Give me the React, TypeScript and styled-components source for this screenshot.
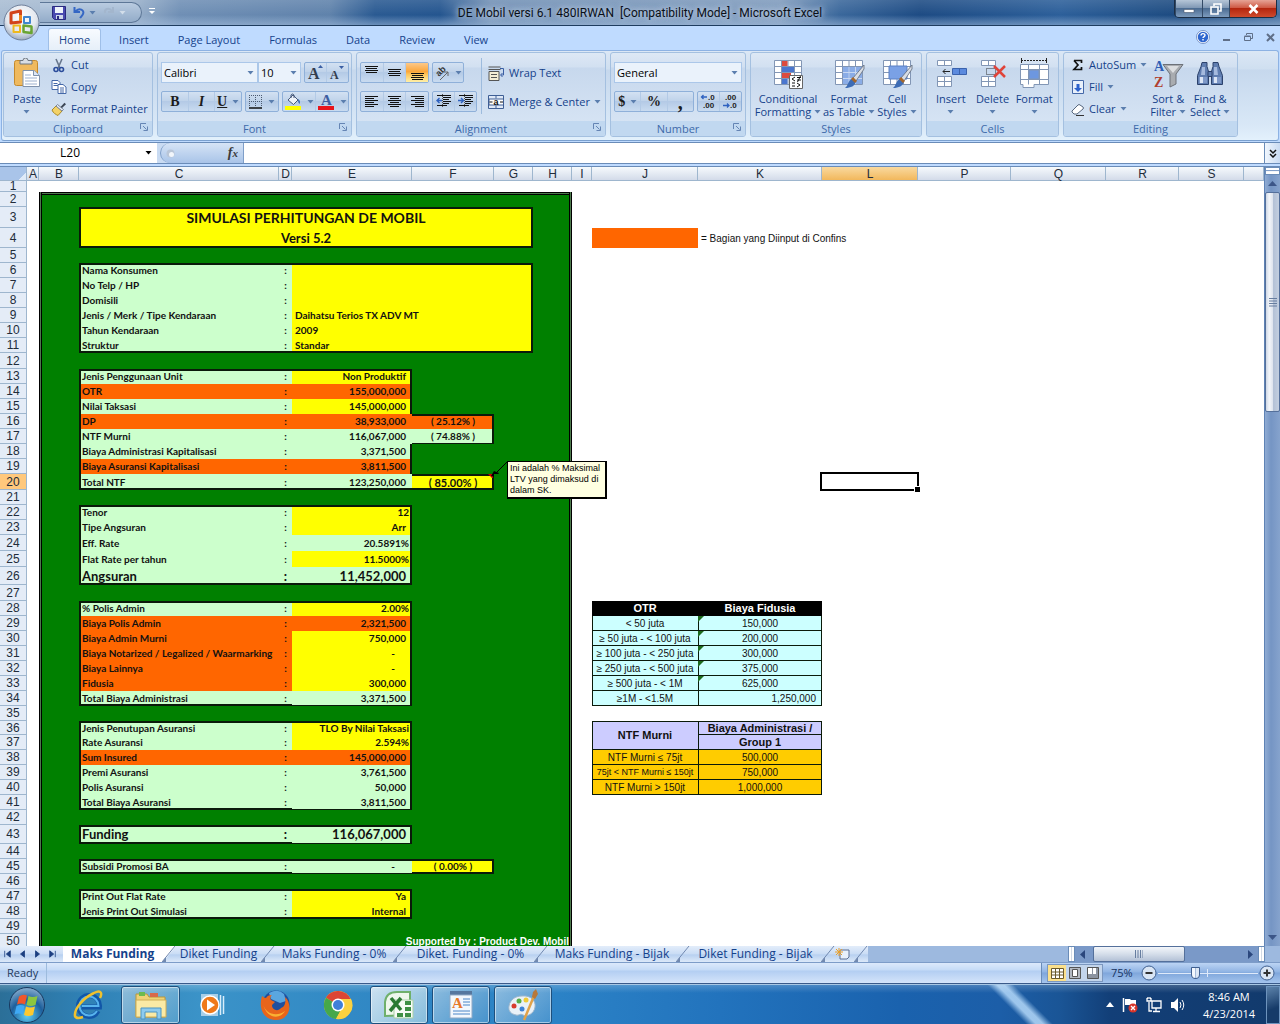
import React from 'react';
import styled, { createGlobalStyle, css } from 'styled-components';

const UI = `"Open Sans", "Noto Sans", sans-serif`;
const BODY = `Lato, "Open Sans", sans-serif`;
const GRID = `"Liberation Sans", Arial, sans-serif`;

const Global = createGlobalStyle`
  * { box-sizing: border-box; }
  body { margin: 0; font: 11px/14px ${UI}; color: #15428b; overflow: hidden; }
  button, input, select { font: inherit; color: inherit; margin: 0; padding: 0; border: 0; background: none; border-radius: 0; }
  svg { display: block; flex: none; }
`;

/* ---------- window frame ---------- */

const Window = styled.main`
  position: relative;
  display: flex;
  flex-direction: column;
  height: 100vh;
  background: #bfdbff;
`;

const TitleBar = styled.header`
  display: grid;
  grid-template-columns: 1fr auto 1fr;
  align-items: start;
  height: 26px;
  border-bottom: 1px solid #1e3c5f;
  background:
    linear-gradient(180deg, rgba(255,255,255,0.12), rgba(255,255,255,0) 60%, rgba(170,195,225,0.5)),
    linear-gradient(90deg, #a9bdd3 0, #9db3cc 130px, #6f8fb5 180px, #5f82ab 330px, #2a5a92 375px, #24558f 440px, #7190b5 490px, #7f9bbd 780px, #3a679b 840px, #1d4b84 920px, #2c5f9a 1060px, #1c4a80 1180px, #46709f 100%);
`;

const QuickBar = styled.div`
  display: flex;
  align-items: center;
  gap: 7px;
  width: 102px;
  height: 21px;
  margin: 2px 0 0 40px;
  padding-left: 12px;
  border: 1px solid #5d7797;
  border-left: 0;
  border-radius: 0 11px 11px 0;
  background: linear-gradient(180deg, #b9cbe0, #93acc9);
`;

const QuickArea = styled.div`
  display: flex;
  align-items: center;
  gap: 7px;
`;

const PlainButton = styled.button`
  display: flex;
  align-items: center;
  gap: 4px;
`;

const Title = styled.h1`
  margin: 4px 0 0;
  font: 12px/19px Roboto, ${UI};
  color: #0a0f18;
  text-shadow: 0 0 6px #c5d5e8, 0 0 6px #c5d5e8;
  white-space: pre;
`;

const Caption = styled.div`
  display: flex;
  justify-self: end;
  margin-right: 3px;
  height: 18px;
  border: 1px solid #1c2e45;
  border-top: 0;
  border-radius: 0 0 5px 5px;
  overflow: hidden;
`;

const CaptionButton = styled.button<{ $close?: boolean }>`
  display: grid;
  place-items: center;
  width: ${p => (p.$close ? 47 : 27)}px;
  border-left: 1px solid #334a66;
  background: ${p => (p.$close
    ? 'linear-gradient(180deg, #e6a396, #cf5a45 45%, #b4260f 50%, #cf4a2c)'
    : 'linear-gradient(180deg, #b6c6d8, #8199b5 45%, #4c6c92 50%, #7d9bbd)')};
`;

const OfficeButton = styled.button`
  position: absolute;
  left: 3px;
  top: 4px;
  z-index: 2;
`;

const TabRow = styled.nav`
  display: flex;
  align-items: flex-end;
  gap: 7px;
  height: 24px;
  padding-left: 48px;
  background: #bfdbff;
`;

const RibbonTab = styled.button<{ $active?: boolean }>`
  height: 22px;
  padding: 0 10px;
  border: 1px solid transparent;
  border-bottom: 0;
  border-radius: 3px 3px 0 0;
  ${p => p.$active && css`
    border-color: #9fbfe8;
    background: linear-gradient(180deg, #f8fbff, #e6eff9);
  `}
`;

const DocControls = styled.div`
  display: flex;
  align-items: center;
  gap: 13px;
  height: 24px;
  margin-left: auto;
  padding: 0 5px 2px 0;
`;

/* ---------- ribbon ---------- */

const Ribbon = styled.section`
  display: flex;
  gap: 4px;
  height: 91px;
  margin: 0 1px;
  padding: 1px 1px 3px;
  border: 1px solid #8db2e3;
  border-bottom-color: #7aa0cf;
  border-radius: 3px;
  background: linear-gradient(180deg, #dbe7f5 0, #cfdff0 18px, #c6d8ed 19px, #d9e8f7 75px, #e3f1fc);
`;

const Group = styled.div<{ $w: number }>`
  display: flex;
  flex-direction: column;
  width: ${p => p.$w}px;
  flex: none;
  border: 1px solid #a4c0e0;
  border-radius: 3px;
  overflow: hidden;
  background: linear-gradient(180deg, #dde8f5 0, #d2e0f1 14px, #c7d8ed 15px, #d9e6f5 100%);
`;

const GroupBody = styled.div`
  flex: 1;
  display: flex;
  padding: 0 3px;
`;

const GroupName = styled.div`
  display: flex;
  justify-content: center;
  align-items: center;
  position: relative;
  height: 15px;
  flex: none;
  color: #3e6aaa;
  background: #c1d8f0;
`;

const Launcher = styled.button`
  position: absolute;
  right: 4px;
  top: 2px;
`;

const Stack = styled.div<{ $gap?: number; $top?: number; $left?: number }>`
  display: flex;
  flex-direction: column;
  gap: ${p => p.$gap ?? 8}px;
  padding-top: ${p => p.$top ?? 9}px;
  padding-left: ${p => p.$left ?? 0}px;
`;

const Line = styled.div<{ $tight?: boolean }>`
  display: flex;
  gap: ${p => (p.$tight ? 0 : 3)}px;
  height: 21px;
`;

const Cluster = styled.div<{ $w: number }>`
  display: flex;
  width: ${p => p.$w}px;
  border: 1px solid #8fb0d9;
  border-radius: 2px;
  background: linear-gradient(180deg, #d3e1f2, #c0d3ea 45%, #b4cae6 50%, #c9dbf0);
`;

const Tool = styled.button<{ $on?: boolean }>`
  flex: 1;
  display: flex;
  align-items: center;
  justify-content: center;
  gap: 5px;
  & + & { border-left: 1px solid #b3cae6; }
  ${p => p.$on && css`background: linear-gradient(180deg, #fbc889, #fba63a 45%, #fdc65c 60%, #fff0a8);`}
`;

const Glyph = styled.span<{ $italic?: boolean; $underline?: boolean; $size?: number }>`
  font: bold ${p => p.$size ?? 14}px/16px "Liberation Serif", serif;
  color: #1b1b1b;
  ${p => p.$italic && css`font-style: italic;`}
  ${p => p.$underline && css`text-decoration: underline;`}
`;

const SelectBox = styled.span<{ $w: number }>`
  position: relative;
  display: block;
  width: ${p => p.$w}px;
  height: 21px;
  border: 1px solid #abc7e9;
  background: #eaf2fb;
  select { width: 100%; height: 100%; padding-left: 2px; appearance: none; color: #000; }
  svg { position: absolute; right: 3px; top: 8px; pointer-events: none; }
`;

const SmallCommand = styled.button`
  display: flex;
  align-items: center;
  gap: 4px;
  height: 22px;
  white-space: nowrap;
`;

const BigCommand = styled.button<{ $w: number }>`
  display: flex;
  flex-direction: column;
  align-items: center;
  width: ${p => p.$w}px;
  padding-top: 5px;
  line-height: 13px;
  white-space: nowrap;
`;

const BigText = styled.span`
  display: flex;
  flex-direction: column;
  align-items: center;
  padding-top: 2px;
`;

const WithArrow = styled.span`
  display: flex;
  align-items: center;
  gap: 3px;
  min-height: 13px;
`;

const Divider = styled.span`
  width: 1px;
  height: 56px;
  margin: 5px 6px 0 4px;
  background: #9dbbdd;
`;

/* ---------- formula bar ---------- */

const FormulaBar = styled.div`
  display: flex;
  height: 22px;
  margin-top: 1px;
  border: 1px solid #6a8cb8;
  border-width: 1px 0;
  background: #c9dbf2;
`;

const NameBox = styled.div`
  display: flex;
  align-items: center;
  width: 157px;
  background: #fff;
  color: #000;
  font-size: 12px;
  input { width: 140px; text-align: center; }
  button { display: grid; place-items: center; width: 17px; }
`;

const FxArea = styled.div`
  display: flex;
  align-items: center;
  justify-content: space-between;
  width: 84px;
  margin-left: 3px;
  padding: 0 5px;
  border: 1px solid #7f9fc9;
  border-width: 0 1px 0 1px;
  border-radius: 10px 0 0 10px;
  background: linear-gradient(180deg, #d6e4f6, #a9c4e8);
`;

const FxButton = styled.button`
  font: italic bold 14px/18px "Liberation Serif", serif;
  color: #3b3b3b;
  small { font-size: 11px; }
`;

const FormulaInput = styled.input`
  flex: 1;
  background: #fff;
`;

const ExpandButton = styled.button`
  display: grid;
  place-items: center;
  width: 16px;
  border-left: 1px solid #6a8cb8;
  background: linear-gradient(90deg, #f0f6fd, #c9dbf2);
`;

/* ---------- sheet ---------- */

const SheetArea = styled.section`
  flex: 1;
  min-height: 0;
  display: flex;
  margin-top: 2px;
  border-top: 1px solid #6a8cb8;
  background: #fff;
`;

const SheetView = styled.div`
  flex: 1;
  overflow: hidden;
`;

const Sheet = styled.table`
  width: 100%;
  table-layout: fixed;
  border-spacing: 0;
  font: bold 10px/11px ${BODY};
  color: #111;
`;

const ColHead = styled.th<{ $on?: boolean }>`
  height: 14px;
  padding: 1px 0 0 1px;
  font: 12px/12px ${GRID};
  color: #222c3a;
  border: 1px solid #9eb6ce;
  border-width: 0 1px 1px 0;
  background: ${p => (p.$on ? 'linear-gradient(180deg, #f9d99f, #f2b85c)' : 'linear-gradient(180deg, #f6fafd, #d3dbe9)')};
`;

const Corner = styled.th`
  padding: 0;
  border: 1px solid #9eb6ce;
  border-width: 0 1px 1px 0;
  background: linear-gradient(135deg, #a9c4e9 80%, #dfeaf8 81%);
`;

const RowHead = styled.th<{ $on?: boolean }>`
  padding: 0;
  font: 12px/10px ${GRID};
  color: #222c3a;
  border: 1px solid #9eb6ce;
  border-width: 0 1px 1px 0;
  background: ${p => (p.$on ? '#ffc87c' : '#e4ecf7')};
`;

type Edges = { l?: number; t?: number; r?: number; b?: number; double?: string };

const shadows = (e: Edges = {}) => {
  const out: string[] = [];
  if (e.l) out.push(`inset ${e.l}px 0 #0a1a0a`);
  if (e.r) out.push(`inset -${e.r}px 0 #0a1a0a`);
  if (e.t) out.push(`inset 0 ${e.t}px #0a1a0a`);
  if (e.b) out.push(`inset 0 -${e.b}px #0a1a0a`);
  for (const s of e.double ?? '') {
    const dir = { l: [1, 0], r: [-1, 0], t: [0, 1] }[s] as number[];
    [['#000', 1], ['#4d7a4d', 2], ['#000', 3]].forEach(([c, n]) =>
      out.push(`inset ${dir[0] * (n as number)}px ${dir[1] * (n as number)}px ${c}`));
  }
  return out.length ? out.join(', ') : 'none';
};

type CellStyle = {
  $bg?: string; $edges?: Edges; $align?: string; $pad?: number; $size?: number; $plain?: boolean; $grid?: boolean; $color?: string;
};

const Cell = styled.td<CellStyle>`
  position: relative;
  padding: 0 ${p => p.$pad ?? 3}px 0 ${p => Math.min(3, p.$pad ?? 3)}px;
  white-space: nowrap;
  background: ${p => p.$bg ?? 'transparent'};
  box-shadow: ${p => shadows(p.$edges)};
  text-align: ${p => p.$align ?? 'left'};
  ${p => p.$grid && css`font-family: ${GRID};`}
  ${p => p.$plain && css`font-weight: normal;`}
  ${p => p.$size && css`font-size: ${p.$size}px;`}
  ${p => p.$color && css`color: ${p.$color};`}
`;

const ErrorMark = styled.i`
  position: absolute;
  left: 0;
  top: 0;
  border: 3px solid transparent;
  border-color: #1d6b1d transparent transparent #1d6b1d;
`;

const Selection = styled.div`
  position: absolute;
  inset: -2px -1px -1px -2px;
  border: 2px solid #000;
  &::after {
    content: '';
    position: absolute;
    right: -3px;
    bottom: -3px;
    width: 5px;
    height: 5px;
    border: 1px solid #fff;
    border-width: 1px 0 0 1px;
    background: #000;
  }
`;

const Note = styled.div`
  position: absolute;
  left: 95px;
  top: -13px;
  z-index: 1;
  width: 100px;
  height: 38px;
  padding: 1px 2px;
  border: 1px solid #000;
  border-width: 1px 2px 2px 1px;
  background: #ffffe1;
  font: 9px/11px ${GRID};
  text-align: left;
  color: #000;
`;

const NoteArrow = styled.svg`
  position: absolute;
  right: -14px;
  top: -13px;
`;

const VScroll = styled.div`
  display: flex;
  flex-direction: column;
  width: 16px;
  border-left: 1px solid #5f83b5;
  background: linear-gradient(90deg, #8fabd3, #7595c4 40%, #86a3cd);
`;

const SplitHandle = styled.div`
  height: 8px;
  border: 1px solid #6a8cb8;
  background: linear-gradient(180deg, #fff 40%, #7d9bc6 41%, #fff 60%);
`;

const ScrollArrow = styled.button<{ $end?: boolean; $vertical?: boolean }>`
  display: grid;
  place-items: center;
  width: 15px;
  height: 17px;
  ${p => p.$end && (p.$vertical ? css`margin-top: auto;` : css`margin-left: auto;`)}
`;

const VThumb = styled.div`
  display: grid;
  place-items: center;
  height: 220px;
  border: 1px solid #54709b;
  border-radius: 2px;
  background: linear-gradient(90deg, #cfd8e6, #f3f6fa 25%, #dfe5ee 50%, #b3c1d6 55%, #c3cfe0);
`;

/* ---------- sheet tabs and status bar ---------- */

const TabBar = styled.div`
  display: flex;
  height: 17px;
  border-bottom: 1px solid #7d9cc8;
  background: #9db9df;
`;

const SheetTabs = styled.div`
  display: flex;
  background: linear-gradient(180deg, #e3edfa, #c9dcf5 50%, #b7d0f0 55%, #dce9f9);
`;

const NavButtons = styled.div`
  display: flex;
  width: 63px;
  button { display: grid; place-items: center; width: 15px; }
`;

const SheetTab = styled.button<{ $w: number; $active?: boolean }>`
  width: ${p => p.$w}px;
  font: 12px/16px ${UI};
  white-space: nowrap;
  ${p => p.$active && css`font-weight: bold; background: #fff;`}
`;

const HScroll = styled.div`
  display: flex;
  align-items: stretch;
  width: 212px;
  margin-left: auto;
  background: #7a99c8;
`;

const HSplit = styled.div`
  width: 7px;
  border: 1px solid #6a8cb8;
  background: linear-gradient(90deg, #fff 35%, #54709b 36%, #fff 55%);
`;

const ScrollCorner = styled.div`
  width: 15px;
  background: #9db9df;
`;

const HThumb = styled.div`
  display: grid;
  place-items: center;
  width: 92px;
  margin-left: 3px;
  border: 1px solid #54709b;
  border-radius: 2px;
  background: linear-gradient(180deg, #f3f6fa, #d5deea 50%, #b3c1d6);
`;

const StatusBar = styled.footer`
  display: flex;
  align-items: center;
  height: 21px;
  background: linear-gradient(180deg, #dce9fb, #c5dbf7 35%, #b3cef2 40%, #d4e4fa);
  border-bottom: 1px solid #3a5a8a;
`;

const Ready = styled.div`
  width: 47px;
  padding-left: 7px;
  border-right: 1px solid #9dbbdd;
  line-height: 20px;
  color: #1e395b;
`;

const ZoomArea = styled.div`
  display: flex;
  align-items: center;
  gap: 8px;
  width: 239px;
  height: 20px;
  margin-left: auto;
  padding-left: 5px;
  border-left: 1px solid #6a8cb8;
  background: linear-gradient(180deg, #bcd4f4, #8fb3e3 45%, #7fa6db 50%, #a5c5ee);
  color: #15325f;
`;

const Views = styled.div`
  display: flex;
  border: 1px solid #7b97bf;
  background: #c3d5ec;
  button { display: grid; place-items: center; width: 18px; height: 16px; }
  button:first-child { background: #fbe08c; }
`;

const ZoomControl = styled.div`
  display: flex;
  align-items: center;
  gap: 1px;
`;

const ZoomSlider = styled.input`
  width: 100px;
  height: 16px;
  appearance: none;
  background: linear-gradient(#dfeafa, #dfeafa) center / 100% 1px no-repeat, linear-gradient(#dfeafa, #dfeafa) center / 1px 8px no-repeat;
  &::-webkit-slider-thumb {
    appearance: none;
    width: 9px;
    height: 12px;
    border: 1px solid #3f5f90;
    border-radius: 1px 1px 5px 5px;
    background: linear-gradient(90deg, #f4f8fd 40%, #6f8fbf 45%, #dce7f5 55%);
  }
`;

/* ---------- taskbar ---------- */

const Taskbar = styled.div`
  display: flex;
  align-items: center;
  height: 40px;
  border-top: 1px solid #a8c7e4;
  background:
    linear-gradient(180deg, rgba(255,255,255,0.2), rgba(255,255,255,0) 8px),
    linear-gradient(45deg, transparent calc(100% - 207px), rgba(190,225,255,0.8) calc(100% - 200px), rgba(190,225,255,0.8) calc(100% - 195px), transparent calc(100% - 188px)),
    linear-gradient(90deg, #2b6f98 0, #2f80b4 80px, #3b93c8 200px, #2f86c4 400px, #2b82c6 560px, #2273bd 720px, #1a62ae 900px, #1c5ea8 1000px, #1a5596 1060px, #123f78 1110px, #123a6c 100%);
`;

const TaskButton = styled.button<{ $w: number; $frame?: 'on' | 'open' }>`
  display: grid;
  place-items: center;
  width: ${p => p.$w}px;
  height: 38px;
  ${p => p.$frame && css`
    border: 1px solid #1d4f7d;
    border-radius: 3px;
    box-shadow: inset 0 0 0 1px rgba(255,255,255,0.5);
    background: ${p.$frame === 'on'
      ? 'linear-gradient(135deg, rgba(255,255,255,0.75), rgba(190,225,235,0.6))'
      : 'linear-gradient(135deg, rgba(255,255,255,0.45), rgba(255,255,255,0.12))'};
  `}
`;

const Tasks = styled.div`
  display: flex;
  align-items: center;
  gap: 4px;
`;

const Tray = styled.div`
  display: flex;
  align-items: center;
  height: 100%;
  margin-left: auto;
  color: #fff;
`;

const TrayIcons = styled.div`
  display: flex;
  align-items: center;
  gap: 8px;
  margin-right: 16px;
`;

const Clock = styled.time`
  width: 54px;
  margin-right: 10px;
  font: 11px/17px ${UI};
  text-align: center;
  white-space: nowrap;
`;

const ShowDesktop = styled.button`
  width: 14px;
  height: 38px;
  border: 1px solid #6d93bd;
  background: linear-gradient(160deg, #5d83ab, #163b69 60%);
`;

/* ---------- icons ---------- */

const Down = ({ c = '#5b7eae' }: { c?: string }) => (
  <svg width="7" height="4" viewBox="0 0 7 4"><path d="M.5 0h6L3.500 3.500z" fill={c} /></svg>
);

const LauncherIcon = () => (
  <svg width="8" height="8" viewBox="0 0 8 8" fill="none" stroke="#6585b4"><path d="M.5 6V.5H6M3 3l3.500 3.500M7.500 3.500V7.500H3.500" /></svg>
);

const OfficeOrb = () => (
  <svg width="37" height="37" viewBox="0 0 37 37">
    <defs>
      <radialGradient id="orb" cx="50%" cy="35%" r="65%">
        <stop offset="0" stopColor="#fff" /><stop offset=".65" stopColor="#e3e8ef" /><stop offset="1" stopColor="#9caabf" />
      </radialGradient>
    </defs>
    <circle cx="18.500" cy="18.500" r="17.500" fill="url(#orb)" stroke="#6e7f9a" />
    <g fill="none" strokeLinejoin="round">
      <path d="M8 9l9.500-2v11L8 19z" stroke="#d2441a" strokeWidth="3" />
      <path d="M17.500 11v6" stroke="#f08a1d" strokeWidth="3" />
      <path d="M21 13h6v6h-6z" stroke="#3f86cf" strokeWidth="2" />
      <path d="M10.500 21.500h6.500V28h-6.500z" stroke="#efb91c" strokeWidth="2" />
      <path d="M20.500 21.500l8 1v6.500l-8-1z" stroke="#69a532" strokeWidth="2.500" />
    </g>
  </svg>
);

const SaveIcon = () => (
  <svg width="14" height="14" viewBox="0 0 14 14">
    <path d="M.5.5h13v13h-11l-2-2z" fill="#4a4ab0" stroke="#2a2a80" />
    <path d="M3 1h8v6H3z" fill="#eef3fb" /><path d="M4 9h7v4H4z" fill="#cfd8ea" /><path d="M5 10h2v3H5z" fill="#2a2a80" />
  </svg>
);

const UndoIcon = ({ flip }: { flip?: boolean }) => (
  <svg width="12" height="13" viewBox="0 0 12 13" fill="none" stroke={flip ? '#a3b6cd' : '#3567c4'} strokeWidth="2">
    <path d={flip ? 'M10 1v5H5M9 5C6 1 1 3 2 7' : 'M1.500 1v5H7M2.500 5.500C6 1 12 4 10 8c-.6 1.700-2 2.700-3 4'} />
  </svg>
);

const HelpIcon = () => (
  <svg width="14" height="14" viewBox="0 0 14 14">
    <circle cx="7" cy="7" r="6" fill="#2e66cf" stroke="#fff" strokeWidth="1.500" /><circle cx="7" cy="7" r="6.500" fill="none" stroke="#2a55a8" strokeWidth=".6" />
    <path d="M5 5.500C5 3 9 3 9 5.300c0 1.300-2 1.300-2 2.700M7 9v1.500" fill="none" stroke="#fff" strokeWidth="1.400" />
  </svg>
);

const PasteIcon = () => (
  <svg width="28" height="32" viewBox="0 0 28 32">
    <rect x="1.500" y="2.500" width="23" height="25" rx="2" fill="#efb95e" stroke="#c58a2c" />
    <path d="M7 2.500h3a2.500 2.500 0 0 1 5 0h4V6H7z" fill="#d8dde4" stroke="#6f7780" />
    <path d="M10 12.500h11l5.500 5v11H10z" fill="#fff" stroke="#7f92ad" />
    <path d="M20.500 12.500v5h6" fill="#dce6f4" stroke="#7f92ad" />
    <path d="M12 17h6M12 20h12M12 23h12M12 26h12" stroke="#9db1cf" />
  </svg>
);

const CutIcon = () => (
  <svg width="16" height="15" viewBox="0 0 16 15" fill="none">
    <path d="M5 1l4 9M11 1L7 10" stroke="#68778d" strokeWidth="1.600" />
    <circle cx="5" cy="11.500" r="2" stroke="#2c4d9b" strokeWidth="1.600" /><circle cx="10.500" cy="11.500" r="2" stroke="#2c4d9b" strokeWidth="1.600" />
  </svg>
);

const CopyIcon = () => (
  <svg width="16" height="14" viewBox="0 0 16 14" stroke="#4468a8">
    <path d="M1 .5h6l2 2v7H1z" fill="#fff" /><path d="M2.500 3.500h4M2.500 5.500h5" />
    <path d="M7 4.500h5l3 2.500v6.500H7z" fill="#fff" /><path d="M9 8h4M9 10h4M9 12h4" />
  </svg>
);

const PainterIcon = () => (
  <svg width="16" height="14" viewBox="0 0 16 14">
    <path d="M1 8l4-4 6 5-4 4.500C5 12.500 2 11 1 8z" fill="#f3d268" stroke="#a98a2c" />
    <path d="M5 4l1.500-1.500 6 5L11 9z" fill="#e8edf5" stroke="#7a879b" /><path d="M9.500 5L13.500.8l1.500 1.500L11 6z" fill="#3c4654" />
  </svg>
);

const GrowFont = ({ small }: { small?: boolean }) => (
  <svg width="17" height="17" viewBox="0 0 17 17">
    <text x="1" y="15" fontFamily="Liberation Serif" fontWeight="bold" fontSize={small ? 12 : 16} fill="#333d4d">A</text>
    <path d={small ? 'M10 2h5l-2.500 3z' : 'M11 4h5l-2.500-3z'} fill="#3a5ea3" />
  </svg>
);

const BorderIcon = () => (
  <svg width="14" height="14" viewBox="0 0 14 14" stroke="#4b5a70">
    <path d="M.5 0v12M6.500 0v12M12.500 0v12M0 .5h13M0 6.500h13" strokeDasharray="1 1" /><path d="M0 13h13" stroke="#111" strokeWidth="1.500" />
  </svg>
);

const FillColor = () => (
  <svg width="17" height="17" viewBox="0 0 17 17">
    <path d="M3 7l5-5 5 5-4.500 4.500z" fill="#eef3fa" stroke="#47597a" /><path d="M6 5V2q1.500-2 3 0v3" fill="none" stroke="#47597a" />
    <path d="M13 6q3 2 1.500 5-1.500-1-1.500-5z" fill="#3568b8" /><path d="M0 13h16v4H0z" fill="#ff0" />
  </svg>
);

const FontColor = () => (
  <svg width="17" height="17" viewBox="0 0 17 17">
    <text x="3" y="12" fontFamily="Liberation Serif" fontWeight="bold" fontSize="15" fill="#3d5da0">A</text><path d="M0 13h16v4H0z" fill="#e8141c" />
  </svg>
);

const Bars = ({ rows, shift }: { rows: number[][]; shift: number }) => (
  <svg width="15" height="15" viewBox="0 0 15 15" stroke="#111">
    {rows.map(([a, b], i) => <path key={i} d={`M${a} ${shift + i * 2 + 0.5}H${b}`} />)}
  </svg>
);

const Indent = ({ right }: { right?: boolean }) => (
  <svg width="16" height="15" viewBox="0 0 16 15" fill="none">
    <path d="M1 1.500h14M7 3.500h8M7 5.500h6M7 7.500h8M7 9.500h6M1 11.500h10" stroke="#111" /><path d="M6.500 0v14" stroke="#555" strokeDasharray="1 1" />
    <path d={right ? 'M0 6.500h5M3 4l2.500 2.500L3 9' : 'M1 6.500h5M3.500 4L1 6.500 3.500 9'} stroke="#2f62c0" strokeWidth="1.400" />
  </svg>
);

const Orient = () => (
  <svg width="16" height="16" viewBox="0 0 16 16">
    <text x="5" y="12" fontFamily="Liberation Sans" fontWeight="bold" fontSize="9" fill="#333" transform="rotate(-45 5 12)">ab</text>
    <path d="M6 15l8-8M14 11V7h-4" fill="none" stroke="#666" />
  </svg>
);

const WrapIcon = () => (
  <svg width="17" height="15" viewBox="0 0 17 15" fill="none">
    <path d="M.5 1h12M.5 3.500h12" stroke="#555" /><path d="M1 5.500h10v9H1z" fill="#f5efd6" stroke="#555" />
    <path d="M3 8.500h6M3 11.500h6" stroke="#555" /><path d="M12 2.500h3.500V9H13M14.500 7l-2 2 2 2" stroke="#3a5ea3" />
  </svg>
);

const MergeIcon = () => (
  <svg width="17" height="15" viewBox="0 0 17 15">
    <path d="M.5.5h15v13H.5zM8 .5v3M8 10.500v3" fill="#dfe9f7" stroke="#3f5f95" /><path d="M1 4h14.500v6H1z" fill="#fff" stroke="#3f5f95" />
    <text x="5.500" y="10" fontFamily="Liberation Sans" fontWeight="bold" fontSize="9" fill="#111">a</text>
    <path d="M1.500 7h3M12 7h3" stroke="#111" />
  </svg>
);

const Decimals = ({ less }: { less?: boolean }) => (
  <svg width="17" height="15" viewBox="0 0 17 15" fontFamily="Liberation Sans" fontWeight="bold" fontSize="8" fill="#222">
    <text x={less ? 3 : 8} y="6">{less ? '.00' : '.0'}</text><text x={less ? 8 : 3} y="14">{less ? '.0' : '.00'}</text>
    <path d={less ? 'M1 11.500h6M5 9.500l2 2-2 2' : 'M7 3H1.500M3.500 1l-2 2 2 2'} fill="none" stroke="#2f62c0" strokeWidth="1.300" />
  </svg>
);

const GridBase = ({ children }: { children?: React.ReactNode }) => (
  <svg width="32" height="32" viewBox="0 0 32 32">
    <path d="M2.500 2.500h27v24h-27z" fill="#fff" stroke="#8296b5" /><path d="M9.500 2.500v24M16 2.500v24M22.500 2.500v24M2.500 8.500h27M2.500 14.500h27M2.500 20.500h27" stroke="#8296b5" />
    {children}
  </svg>
);

const Brush = () => (
  <g><path d="M31 7L20 20l3 3L31 11z" fill="#d8dde5" stroke="#606a78" strokeWidth=".8" /><path d="M20 20l3 3c-1 5-5 7-11 7 3-2 3-8 8-10z" fill="#3d6cb5" /><path d="M20 19l4 4-2 2-4-4z" fill="#a5672b" /></g>
);

const ConditionalIcon = () => (
  <GridBase>
    <path d="M10 3h5.500v5H10zM10 15h9v5h-9z" fill="#dc4b3e" /><path d="M10 9h12v5H10zM10 21h5.500v5H10z" fill="#4a76cf" />
    <path d="M17.500 17.500h13v13h-13z" fill="#fff" stroke="#666" /><path d="M23 19l-3 2 3 2M20 25h3M25 19.500h4M25 22h4M28.500 18l-3 6M25 25l3 2-3 2M20 28h3" fill="none" stroke="#111" />
  </GridBase>
);
const FormatTableIcon = () => <GridBase><path d="M10 9h19v17H10z" fill="#6d97e0" opacity=".8" /><path d="M16 9v17M22.500 9v17M10 14.500h19M10 20.500h19" stroke="#c8d8f2" /><Brush /></GridBase>;
const CellStylesIcon = () => <GridBase><path d="M8 8h18v13H8z" fill="#7aa1e6" stroke="#5a80c4" /><Brush /></GridBase>;

const InsertIcon = () => (
  <svg width="32" height="32" viewBox="0 0 32 32" stroke="#8296b5">
    <path d="M2.500 2.500h14v5h-14zM9.500 2.500v5M2.500 18.500h14v10h-14zM9.500 18.500v10M2.500 23.500h14" fill="#fff" />
    <path d="M17.500 10.500h14v6h-14zM24.500 10.500v6" fill="#5b8ade" stroke="#3a62ad" /><path d="M15 13.500H8M10.500 11L8 13.500l2.500 2.500" fill="none" stroke="#222" />
  </svg>
);
const DeleteIcon = () => (
  <svg width="32" height="32" viewBox="0 0 32 32" stroke="#8296b5">
    <path d="M4.500 2.500h14v5h-14zM11.500 2.500v5M4.500 18.500h14v10h-14zM11.500 18.500v10M4.500 23.500h14" fill="#fff" />
    <path d="M9.500 10.500h9v6h-9z" fill="none" stroke="#333" strokeDasharray="1 1" /><path d="M17 8l11 11M28 8L17 19" stroke="#e0443a" strokeWidth="2.500" />
  </svg>
);
const FormatIcon = () => (
  <svg width="32" height="32" viewBox="0 0 32 32" stroke="#8296b5">
    <path d="M3 2.500h26M3.500 0v5M28.500 0v5" stroke="#222" strokeDasharray="2 1" />
    <path d="M2.500 6.500h28v20H16v3H5v-3H2.500zM10.500 6.500v20M21.500 6.500v20M2.500 11.500h28M2.500 21.500h28" fill="#fff" /><path d="M11 12h10v9H11z" fill="#6d97e0" />
  </svg>
);

const SigmaIcon = () => <svg width="14" height="14" viewBox="0 0 14 14"><path d="M3 2.500h7.500V5M3 2.500L7 7l-4 4.500h7.500V9" fill="none" stroke="#111" strokeWidth="1.700" /></svg>;
const FillIcon = () => (
  <svg width="14" height="15" viewBox="0 0 14 15"><path d="M1.500.5h11v13h-11z" fill="#e8f0fb" stroke="#4468a8" /><path d="M5.500 4h3v4H11l-4 4-4-4h2.500z" fill="#2d62cc" /></svg>
);
const EraserIcon = () => (
  <svg width="14" height="13" viewBox="0 0 14 13"><path d="M1 8l6-6q1-1 2 0l3 2q1 1 0 2l-6 5H3L1 9z" fill="#fff" stroke="#56677f" /><path d="M5 12.500h8" stroke="#333" /></svg>
);
const SortIcon = () => (
  <svg width="32" height="32" viewBox="0 0 32 32">
    <text x="2" y="13" fontFamily="Liberation Serif" fontWeight="bold" fontSize="14" fill="#2f5eb5">A</text>
    <text x="2" y="29" fontFamily="Liberation Serif" fontWeight="bold" fontSize="14" fill="#b0402f">Z</text>
    <path d="M11 6.500h20L24 16v10l-6 3V16z" fill="#a9acb0" stroke="#6c7178" /><path d="M15 8h12l-6 7z" fill="#dcdee0" />
  </svg>
);
const FindIcon = () => (
  <svg width="32" height="32" viewBox="0 0 32 32">
    <g fill="#5f7db0" stroke="#2c426c">
      <path d="M8 4.500h5v4l1.500 5v13h-11v-9L7 8.500zM19 4.500h5l1 4 3.500 9v9h-11v-13l1.500-5z" /><path d="M14 13.500h4v5h-4z" />
    </g>
    <path d="M5 19h8v6H5zM19 19h8v6h-8z" fill="#7f99c8" /><path d="M6 19h3v6H6zM20 19h3v6h-3z" fill="#dbe5f5" /><path d="M8 9h3v8H7zM20 9h3l1 8h-4z" fill="#a5bade" />
  </svg>
);

/* ---------- sheet data ---------- */

const GREEN = '#008000', MINT = '#ccffcc', YEL = '#ffff00', ORG = '#ff6600', CYAN = '#ccffff', LILAC = '#ccccff', GOLD = '#ffcc00';

const columns: [string, number | undefined][] = [
  ['A', 12], ['B', 40], ['C', 200], ['D', 13], ['E', 120], ['F', 82], ['G', 39], ['H', 39], ['I', 20], ['J', 106],
  ['K', 124], ['L', 96], ['P', 93], ['Q', 95], ['R', 73], ['S', 65], ['', undefined],
];

const tall: Record<number, number> = { 1: 11, 3: 21, 4: 20, 12: 16, 20: 16, 24: 16, 25: 16, 26: 18, 27: 16, 36: 14, 43: 19 };

type CellData = CellStyle & { text?: React.ReactNode; span?: number; rows?: number };
const cells: Record<string, CellData> = {};
const skip = new Set<string>();

cells.C3 = { text: 'SIMULASI PERHITUNGAN DE MOBIL', span: 5, $bg: YEL, $align: 'center', $size: 14, $edges: { l: 2, t: 2, r: 2 } };
cells.C4 = { text: 'Versi 5.2', span: 5, $bg: YEL, $align: 'center', $size: 13, $edges: { l: 2, b: 2, r: 2 } };

type Opt = { pad?: number; size?: number; top?: boolean; end?: boolean; thin?: boolean; open?: boolean; wide?: boolean; left?: boolean };
const line = (row: number, label: string, value: string, lbg: string, vbg: string, o: Opt = {}) => {
  const t = o.top ? 2 : 0;
  const b = o.end ? 2 : 0;
  cells[`C${row}`] = { text: label, $bg: lbg, $size: o.size, $edges: { l: 2, t, b } };
  cells[`D${row}`] = { text: ':', $bg: lbg, $align: 'center', $size: o.size, $edges: { t, b } };
  cells[`E${row}`] = {
    text: value, $bg: vbg, $size: o.size, span: o.wide ? 3 : 1, $align: o.left ? 'left' : 'right', $pad: o.pad ?? 6,
    $edges: { t, b: o.thin ? 1 : b, r: o.open ? 0 : 2 },
  };
};

const info: Opt = { wide: true, left: true };
line(6, 'Nama Konsumen', '', MINT, YEL, { ...info, top: true });
line(7, 'No Telp / HP', '', MINT, YEL, info);
line(8, 'Domisili', '', MINT, YEL, info);
line(9, 'Jenis / Merk / Tipe Kendaraan', 'Daihatsu Terios TX ADV MT', MINT, YEL, info);
line(10, 'Tahun Kendaraan', '2009', MINT, YEL, info);
line(11, 'Struktur', 'Standar', MINT, YEL, { ...info, end: true });
line(13, 'Jenis Penggunaan Unit', 'Non Produktif', MINT, YEL, { top: true });
line(14, 'OTR', '155,000,000', ORG, ORG);
line(15, 'Nilai Taksasi', '145,000,000', MINT, YEL);
line(16, 'DP', '38,933,000', ORG, ORG, { open: true });
line(17, 'NTF Murni', '116,067,000', MINT, MINT, { open: true });
line(18, 'Biaya Administrasi Kapitalisasi', '3,371,500', MINT, MINT);
line(19, 'Biaya Asuransi Kapitalisasi', '3,811,500', ORG, ORG);
line(20, 'Total NTF', '123,250,000', MINT, MINT, { end: true, open: true });
line(22, 'Tenor', '12', MINT, YEL, { top: true, pad: 3 });
line(23, 'Tipe Angsuran', 'Arr', MINT, YEL);
line(24, 'Eff. Rate', '20.5891%', MINT, MINT, { pad: 3 });
line(25, 'Flat Rate per tahun', '11.5000%', MINT, YEL, { pad: 3 });
line(26, 'Angsuran', '11,452,000', MINT, MINT, { size: 13, end: true });
line(28, '% Polis Admin', '2.00%', MINT, YEL, { top: true, pad: 3 });
line(29, 'Biaya Polis Admin', '2,321,500', ORG, ORG);
line(30, 'Biaya Admin Murni', '750,000', ORG, YEL);
line(31, 'Biaya Notarized / Legalized / Waarmarking', '-', ORG, YEL, { pad: 17 });
line(32, 'Biaya Lainnya', '-', ORG, YEL, { pad: 17 });
line(33, 'Fidusia', '300,000', ORG, YEL);
line(34, 'Total Biaya Administrasi', '3,371,500', MINT, MINT, { end: true, thin: true });
line(36, 'Jenis Penutupan Asuransi', 'TLO By Nilai Taksasi', MINT, YEL, { top: true, pad: 3 });
line(37, 'Rate Asuransi', '2.594%', MINT, YEL, { pad: 3 });
line(38, 'Sum Insured', '145,000,000', ORG, ORG);
line(39, 'Premi Asuransi', '3,761,500', MINT, MINT);
line(40, 'Polis Asuransi', '50,000', MINT, MINT);
line(41, 'Total Biaya Asuransi', '3,811,500', MINT, MINT, { end: true, thin: true });
line(43, 'Funding', '116,067,000', MINT, MINT, { size: 13, top: true, end: true, thin: true });
line(45, 'Subsidi Promosi BA', '-', MINT, MINT, { top: true, end: true, thin: true, open: true, pad: 17 });
line(47, 'Print Out Flat Rate', 'Ya', MINT, YEL, { top: true });
line(48, 'Jenis Print Out Simulasi', 'Internal', MINT, YEL, { end: true });

cells.F16 = { text: '( 25.12% )', $bg: ORG, $align: 'center', $edges: { t: 2, r: 2 } };
cells.F17 = { text: '( 74.88% )', $bg: MINT, $align: 'center', $edges: { b: 1, r: 2 } };
cells.F20 = {
  $bg: YEL, $align: 'center', $size: 11, $edges: { t: 2, r: 2, b: 2 },
  text: (
    <>
      ( 85.00% )
      <NoteArrow width="20" height="17" viewBox="0 0 20 17">
        <path d="M0 13h5v5z" fill="#c00" /><path d="M19 1L7 13" stroke="#000" /><path d="M3 15l3-5 5 2-3 4z" fill="#000" />
      </NoteArrow>
      <Note>Ini adalah % Maksimal<br />LTV yang dimaksud di<br />dalam SK.</Note>
    </>
  ),
};
cells.F45 = { text: '( 0.00% )', $bg: YEL, $align: 'center', $edges: { t: 2, r: 2, b: 2 } };
cells.E50 = { text: 'Supported by : Product Dev. Mobil', span: 4, $bg: GREEN, $align: 'right', $grid: true, $size: 10, $color: '#fff', $edges: { double: 'r' } };
cells.J4 = { $bg: ORG };
cells.K4 = { text: '= Bagian yang Diinput di Confins', $grid: true, $plain: true, $size: 10, span: 3 };
cells.L20 = { text: <Selection /> };

cells.J28 = { text: 'OTR', $bg: '#000', $color: '#fff', $align: 'center', $grid: true, $size: 11 };
cells.K28 = { text: 'Biaya Fidusia', $bg: '#000', $color: '#fff', $align: 'center', $grid: true, $size: 11 };
([
  [29, '< 50 juta', '150,000'], [30, '≥ 50 juta - < 100 juta', '200,000'], [31, '≥ 100 juta - < 250 juta', '300,000'],
  [32, '≥ 250 juta - < 500 juta', '375,000'], [33, '≥ 500 juta - < 1M', '625,000'], [34, '≥1M - <1.5M', '1,250,000'],
] as [number, string, string][]).forEach(([r, a, b]) => {
  cells[`J${r}`] = { text: a, $bg: CYAN, $align: 'center', $grid: true, $plain: true, $size: 10, $edges: { l: 1, b: 1 } };
  cells[`K${r}`] = {
    text: r < 34 ? <>{b}<ErrorMark /></> : b,
    $bg: CYAN, $align: r < 34 ? 'center' : 'right', $pad: r < 34 ? 3 : 6, $grid: true, $plain: true, $size: 10, $edges: { l: 1, b: 1, r: 1 },
  };
});
cells.J36 = { text: 'NTF Murni', rows: 2, $bg: LILAC, $align: 'center', $grid: true, $size: 11, $edges: { l: 1, t: 1, b: 1 } };
cells.K36 = { text: 'Biaya Administrasi /', $bg: LILAC, $align: 'center', $grid: true, $size: 11, $edges: { l: 1, t: 1, b: 1, r: 1 } };
cells.K37 = { text: 'Group 1', $bg: LILAC, $align: 'center', $grid: true, $size: 11, $edges: { l: 1, b: 1, r: 1 } };
skip.add('J37');
([[38, 'NTF Murni ≤ 75jt', '500,000'], [39, '75jt < NTF Murni ≤ 150jt', '750,000'], [40, 'NTF Murni > 150jt', '1,000,000']] as [number, string, string][])
  .forEach(([r, a, b]) => {
    cells[`J${r}`] = { text: a, $bg: GOLD, $align: 'center', $pad: 0, $grid: true, $plain: true, $size: r === 39 ? 9 : 10, $edges: { l: 1, b: 1 } };
    cells[`K${r}`] = { text: b, $bg: GOLD, $align: 'center', $grid: true, $plain: true, $size: 10, $edges: { l: 1, b: 1, r: 1 } };
  });

const renderRow = (row: number) => {
  const out: React.ReactNode[] = [];
  for (let i = 0; i < columns.length;) {
    const col = columns[i][0];
    const key = `${col}${row}`;
    if (skip.has(key)) { i += 1; continue; }
    const data = cells[key];
    const inPanel = row > 1 && i > 0 && i < 8;
    const double = inPanel ? `${i === 1 ? 'l' : ''}${i === 7 ? 'r' : ''}${row === 2 ? 't' : ''}` : '';
    const { text, span = 1, rows, ...style } = data ?? {};
    out.push(
      <Cell key={key} colSpan={span} rowSpan={rows} $bg={inPanel ? GREEN : undefined} $edges={{ double }} {...style}>{text}</Cell>,
    );
    i += span;
  }
  return out;
};

const SheetGrid = () => (
  <Sheet>
    <colgroup>
      <col width={27} />
      {columns.map(([c, w]) => <col key={c} width={w} />)}
    </colgroup>
    <thead>
      <tr>
        <Corner />
        {columns.map(([c]) => <ColHead key={c} scope="col" $on={c === 'L'}>{c}</ColHead>)}
      </tr>
    </thead>
    <tbody>
      {Array.from({ length: 50 }, (_, i) => i + 1).map(r => (
        <tr key={r} style={{ height: tall[r] ?? 15 }}>
          <RowHead scope="row" $on={r === 20}>{r}</RowHead>
          {renderRow(r)}
        </tr>
      ))}
    </tbody>
  </Sheet>
);

/* ---------- ribbon groups ---------- */

const RibbonGroup = ({ name, w, launcher, children }: { name: string; w: number; launcher?: boolean; children: React.ReactNode }) => (
  <Group $w={w} role="group" aria-label={name}>
    <GroupBody>{children}</GroupBody>
    <GroupName>{name}{launcher && <Launcher aria-label={`${name} options`}><LauncherIcon /></Launcher>}</GroupName>
  </Group>
);

const Dropdown = ({ label, value, w }: { label: string; value: string; w: number }) => (
  <SelectBox $w={w}><select aria-label={label} defaultValue={value}><option>{value}</option></select><Down /></SelectBox>
);

const Big = ({ icon, a, b, w }: { icon: React.ReactNode; a: string; b?: string; w: number }) => (
  <BigCommand $w={w}>{icon}<BigText><span>{a}</span><WithArrow>{b}<Down /></WithArrow></BigText></BigCommand>
);

const full = [[1, 14], [1, 10], [1, 14], [1, 10], [1, 14], [1, 10]];
const mid = [[1, 14], [3, 12], [1, 14], [3, 12], [1, 14], [3, 12]];
const end = [[1, 14], [5, 14], [1, 14], [5, 14], [1, 14], [5, 14]];
const four = [[1, 14], [2, 13], [1, 14], [2, 13]];

const RibbonBar = () => (
  <Ribbon>
    <RibbonGroup name="Clipboard" w={150} launcher>
      <Big icon={<PasteIcon />} a="Paste" w={40} />
      <Stack $gap={0} $top={1} $left={4}>
        <SmallCommand><CutIcon />Cut</SmallCommand>
        <SmallCommand><CopyIcon />Copy</SmallCommand>
        <SmallCommand><PainterIcon />Format Painter</SmallCommand>
      </Stack>
    </RibbonGroup>
    <RibbonGroup name="Font" w={195} launcher>
      <Stack>
        <Line>
          <Line $tight><Dropdown label="Font" value="Calibri" w={97} /><Dropdown label="Font size" value="10" w={43} /></Line>
          <Cluster $w={45}><Tool aria-label="Grow font"><GrowFont /></Tool><Tool aria-label="Shrink font"><GrowFont small /></Tool></Cluster>
        </Line>
        <Line>
          <Cluster $w={81}>
            <Tool><Glyph>B</Glyph></Tool><Tool><Glyph $italic>I</Glyph></Tool><Tool><Glyph $underline>U</Glyph><Down /></Tool>
          </Cluster>
          <Cluster $w={34}><Tool aria-label="Borders"><BorderIcon /><Down /></Tool></Cluster>
          <Cluster $w={67}><Tool aria-label="Fill color"><FillColor /><Down /></Tool><Tool aria-label="Font color"><FontColor /><Down /></Tool></Cluster>
        </Line>
      </Stack>
    </RibbonGroup>
    <RibbonGroup name="Alignment" w={250} launcher>
      <Stack>
        <Line>
          <Cluster $w={69}>
            <Tool aria-label="Top align"><Bars rows={four} shift={1} /></Tool><Tool aria-label="Middle align"><Bars rows={four} shift={4} /></Tool><Tool $on aria-label="Bottom align"><Bars rows={four} shift={8} /></Tool>
          </Cluster>
          <Cluster $w={32}><Tool aria-label="Orientation"><Orient /><Down /></Tool></Cluster>
        </Line>
        <Line>
          <Cluster $w={69}>
            <Tool aria-label="Align left"><Bars rows={full} shift={2} /></Tool><Tool aria-label="Center"><Bars rows={mid} shift={2} /></Tool><Tool aria-label="Align right"><Bars rows={end} shift={2} /></Tool>
          </Cluster>
          <Cluster $w={45}><Tool aria-label="Decrease indent"><Indent /></Tool><Tool aria-label="Increase indent"><Indent right /></Tool></Cluster>
        </Line>
      </Stack>
      <Divider />
      <Stack $gap={7}>
        <SmallCommand><WrapIcon />Wrap Text</SmallCommand>
        <SmallCommand><MergeIcon />Merge &amp; Center <Down /></SmallCommand>
      </Stack>
    </RibbonGroup>
    <RibbonGroup name="Number" w={136} launcher>
      <Stack>
        <Line><Dropdown label="Number format" value="General" w={128} /></Line>
        <Line>
          <Cluster $w={80}><Tool><Glyph>$</Glyph><Down /></Tool><Tool><Glyph>%</Glyph></Tool><Tool><Glyph $size={20}>,</Glyph></Tool></Cluster>
          <Cluster $w={45}><Tool aria-label="Increase decimal"><Decimals /></Tool><Tool aria-label="Decrease decimal"><Decimals less /></Tool></Cluster>
        </Line>
      </Stack>
    </RibbonGroup>
    <RibbonGroup name="Styles" w={172}>
      <Big icon={<ConditionalIcon />} a="Conditional" b="Formatting" w={68} />
      <Big icon={<FormatTableIcon />} a="Format" b="as Table" w={54} />
      <Big icon={<CellStylesIcon />} a="Cell" b="Styles" w={42} />
    </RibbonGroup>
    <RibbonGroup name="Cells" w={133}>
      <Big icon={<InsertIcon />} a="Insert" w={42} />
      <Big icon={<DeleteIcon />} a="Delete" w={42} />
      <Big icon={<FormatIcon />} a="Format" w={42} />
    </RibbonGroup>
    <RibbonGroup name="Editing" w={175}>
      <Stack $gap={0} $top={1} $left={4}>
        <SmallCommand><SigmaIcon />AutoSum <Down /></SmallCommand>
        <SmallCommand><FillIcon />Fill <Down /></SmallCommand>
        <SmallCommand><EraserIcon />Clear <Down /></SmallCommand>
      </Stack>
      <Big icon={<SortIcon />} a="Sort &amp;" b="Filter" w={42} />
      <Big icon={<FindIcon />} a="Find &amp;" b="Select" w={42} />
    </RibbonGroup>
  </Ribbon>
);

/* ---------- taskbar icons ---------- */

const StartOrb = () => (
  <svg width="38" height="38" viewBox="0 0 38 38">
    <defs><radialGradient id="start" cx="50%" cy="80%" r="75%"><stop offset="0" stopColor="#5fd0f5" /><stop offset=".6" stopColor="#1d5f9c" /><stop offset="1" stopColor="#7ba4c8" /></radialGradient></defs>
    <circle cx="19" cy="19" r="17.500" fill="url(#start)" stroke="#18395f" />
    <path d="M11 10.500q4-3 8-1l-2 9q-4-2-8 0z" fill="#f0562a" /><path d="M20.500 10q4 2 9 0l-2 9q-5 2-9 0z" fill="#8cc63f" />
    <path d="M8.500 20q4-2 8 0l-2 8.500q-4-2-8 0z" fill="#3fa9f5" /><path d="M18 20.500q4 2 9 0l-2 8.500q-5 2-9 0z" fill="#fdc82f" />
  </svg>
);
const IeIcon = () => (
  <svg width="32" height="32" viewBox="0 0 32 32" fill="none">
    <path d="M26 22c-2 4-5 5.500-9 5.500A10.500 10.500 0 1 1 27.500 18H10" stroke="#1257a8" strokeWidth="5" /><path d="M25 22c-2 3-5 4.500-8 4.500a9.500 9.500 0 1 1 9.500-9.500H10" stroke="#58b4ee" strokeWidth="2" />
    <path d="M28 9c3-6 0-8-6-5C11 9 2 20 3 27c1 3 5 2 8 1" stroke="#f0c12e" strokeWidth="2.500" />
  </svg>
);
const FolderIcon = () => (
  <svg width="34" height="30" viewBox="0 0 34 30">
    <path d="M2 4h11l2 3h16v20H2z" fill="#efd276" stroke="#b8963c" /><path d="M5 2h6v4H5z" fill="#6dbb4d" /><path d="M16 3h8v4h-8z" fill="#d8694a" /><path d="M2 10h30v17H2z" fill="#fbeaa5" stroke="#cfae57" />
    <path d="M7 29V18h20v11h-4v-7H11v7z" fill="#8ecbee" stroke="#4b95c4" />
  </svg>
);
const PlayerIcon = () => (
  <svg width="26" height="24" viewBox="0 0 26 24"><path d="M1 1h17v22H1z" fill="#a7cfe8" /><path d="M20.500 2v20M23.500 3v18" stroke="#d9edfa" strokeWidth="1.500" /><circle cx="10" cy="12" r="9" fill="#ef7a1a" stroke="#fff" strokeWidth="1.500" /><path d="M7 6.500l8 5.500-8 5.500z" fill="#fff" /></svg>
);
const FirefoxIcon = () => (
  <svg width="32" height="32" viewBox="0 0 32 32">
    <circle cx="16" cy="15" r="13.500" fill="#1f4f9e" /><path d="M9 4q9-5 15 1l2 7-6 2-9-4z" fill="#5aa6e0" />
    <path d="M2 7q2 2 4 2c1-2 3-3 6-3-2 2-2 4-1 5l4 2-3 3c0 5 6 7 9 3 4-1 5-6 4-11 8 7 5 23-9 23C4 31-2 20 2 7z" fill="#e8651b" /><path d="M3 15c2 9 13 14 22 7-4 8-18 9-22-7z" fill="#f9b233" />
  </svg>
);
const ChromeIcon = () => (
  <svg width="30" height="30" viewBox="0 0 30 30">
    <circle cx="15" cy="15" r="14" fill="#fbd140" /><path d="M15 15L3 7.700A14 14 0 0 1 27.500 9z" fill="#dd4535" /><path d="M15 15L3 7.700A14 14 0 0 0 13 29l6-11z" fill="#46a84a" /><path d="M15 9h13a14 14 0 0 1-15 20l6-11z" fill="#fbd140" />
    <circle cx="15" cy="15" r="6.500" fill="#fff" /><circle cx="15" cy="15" r="5" fill="#3f7fd8" />
  </svg>
);
const ExcelIcon = () => (
  <svg width="34" height="32" viewBox="0 0 34 32">
    <path d="M3 27V13Q4 3 15 3h13v23z" fill="#eef7ec" stroke="#6fb06b" strokeWidth="2" />
    <path d="M12 11h19v18H12z" fill="#f7fbf6" stroke="#a9cfa6" /><path d="M23 12h6v4h-6zM23 18h6v4h-6zM23 24h6v4h-6zM15 24h6v4h-6z" fill="#3f8f45" />
    <path d="M9 9l10 12M19 9L8 22" stroke="#2b7a32" strokeWidth="3.500" />
  </svg>
);
const WordpadIcon = () => (
  <svg width="26" height="30" viewBox="0 0 26 30">
    <path d="M2 1h22v5H2z" fill="#56779e" /><path d="M2 5h22v23H2z" fill="#f3f8fd" stroke="#8fa9c5" /><text x="4" y="18" fontFamily="Liberation Serif" fontWeight="bold" fontSize="15" fill="#e8792a">A</text>
    <path d="M15 9h7M15 12h7M15 15h7M5 21h17M5 24h17" stroke="#4a86c8" />
  </svg>
);
const PaintIcon = () => (
  <svg width="34" height="34" viewBox="0 0 34 34">
    <path d="M16 8c9-1 14 5 13 11-1 7-8 10-12 8-3-2-4 1-7 0-5-1-8-4-7-9C4 12 9 8 16 8z" fill="#e9f1f8" stroke="#9db6cc" />
    <circle cx="8" cy="18" r="2.500" fill="#d83a2e" /><circle cx="13" cy="13" r="2.500" fill="#58ad48" /><circle cx="20" cy="12" r="2.500" fill="#f0cb3a" /><circle cx="16" cy="21" r="2.500" fill="#3d83d6" />
    <path d="M28 8L18 32" stroke="#e0a24a" strokeWidth="2.500" /><path d="M26 9l1-5 3-3 2 5-3 5z" fill="#b7783a" />
  </svg>
);

const Slash = ({ first }: { first?: boolean }) => (
  <svg width="14" height="16" viewBox="0 0 14 16"><path d="M0 0h14L1 16H0z" fill={first ? '#fff' : 'none'} /><path d="M13 0L0 16" stroke="#7189b0" /><path d="M0 16l4-5v5z" fill="#7189b0" /></svg>
);

const sheetTabs: [string, number][] = [['Maks Funding', 99], ['Diket Funding', 85], ['Maks Funding - 0%', 118], ['Diket. Funding - 0%', 127], ['Maks Funding - Bijak', 128], ['Diket Funding - Bijak', 131]];
const navPaths = ['M1 1v8M8 1L3 5l5 4z', 'M7 1L2 5l5 4z', 'M2 1l5 4-5 4z', 'M1 1l5 4-5 4zM8 1v8'];

export default function App() {
  return (
    <Window>
      <Global />
      <TitleBar>
        <QuickArea>
          <QuickBar>
            <PlainButton aria-label="Save"><SaveIcon /></PlainButton>
            <PlainButton aria-label="Undo"><UndoIcon /><Down /></PlainButton>
            <PlainButton aria-label="Redo"><UndoIcon flip /><Down c="#d3deea" /></PlainButton>
          </QuickBar>
          <PlainButton aria-label="Customize toolbar"><svg width="6" height="7" viewBox="0 0 6 7"><path d="M0 .5h6" stroke="#fff" /><path d="M0 3h6L3 6z" fill="#fff" /></svg></PlainButton>
        </QuickArea>
        <Title>DE Mobil versi 6.1 480IRWAN  [Compatibility Mode] - Microsoft Excel</Title>
        <Caption>
          <CaptionButton aria-label="Minimize"><svg width="12" height="10" viewBox="0 0 12 10"><path d="M1 5.500h10v3H1z" fill="#fff" stroke="#44566e" strokeWidth=".6" /></svg></CaptionButton>
          <CaptionButton aria-label="Restore"><svg width="12" height="12" viewBox="0 0 12 12" fill="none" stroke="#fff" strokeWidth="1.600"><path d="M4 3V1h7v7H9M1 4h7v7H1z" /></svg></CaptionButton>
          <CaptionButton $close aria-label="Close"><svg width="11" height="10" viewBox="0 0 11 10"><path d="M1.500 1l8 8M9.500 1l-8 8" stroke="#fff" strokeWidth="2.600" /></svg></CaptionButton>
        </Caption>
      </TitleBar>
      <OfficeButton aria-label="Office button"><OfficeOrb /></OfficeButton>
      <TabRow>
        {['Home', 'Insert', 'Page Layout', 'Formulas', 'Data', 'Review', 'View'].map((t, i) => <RibbonTab key={t} $active={i === 0}>{t}</RibbonTab>)}
        <DocControls>
          <PlainButton aria-label="Help"><HelpIcon /></PlainButton>
          <PlainButton aria-label="Minimize workbook"><svg width="8" height="9" viewBox="0 0 8 9"><path d="M0 7h7" stroke="#5f6f88" strokeWidth="2" /></svg></PlainButton>
          <PlainButton aria-label="Restore workbook"><svg width="9" height="8" viewBox="0 0 9 8" fill="none" stroke="#5f6f88"><path d="M2.500 2V.5h6v5H7M.5 3.500h6v4h-6zM.5 3h6" /></svg></PlainButton>
          <PlainButton aria-label="Close workbook"><svg width="9" height="9" viewBox="0 0 9 9"><path d="M1 1l7 7M8 1L1 8" stroke="#5f6f88" strokeWidth="2" /></svg></PlainButton>
        </DocControls>
      </TabRow>
      <RibbonBar />
      <FormulaBar>
        <NameBox><input aria-label="Name box" defaultValue="L20" /><button aria-label="Names"><Down c="#000" /></button></NameBox>
        <FxArea>
          <svg width="9" height="9" viewBox="0 0 9 9"><circle cx="4.500" cy="4.500" r="4" fill="#b9c6d8" /><circle cx="5.500" cy="5.500" r="2.500" fill="#f2f6fb" /></svg>
          <FxButton aria-label="Insert function">f<small>x</small></FxButton>
        </FxArea>
        <FormulaInput aria-label="Formula" />
        <ExpandButton aria-label="Expand formula bar"><svg width="8" height="9" viewBox="0 0 8 9" fill="none" stroke="#111" strokeWidth="1.500"><path d="M1 1l3 3 3-3M1 5l3 3 3-3" /></svg></ExpandButton>
      </FormulaBar>
      <SheetArea>
        <SheetView><SheetGrid /></SheetView>
        <VScroll>
          <SplitHandle />
          <ScrollArrow aria-label="Scroll up"><svg width="9" height="5" viewBox="0 0 9 5"><path d="M0 5h9L4.500 0z" fill="#3c5688" /></svg></ScrollArrow>
          <VThumb><svg width="8" height="9" viewBox="0 0 8 9"><path d="M0 .5h8M0 3h8M0 5.500h8M0 8h8" stroke="#667d9f" /></svg></VThumb>
          <ScrollArrow $end $vertical aria-label="Scroll down"><svg width="9" height="5" viewBox="0 0 9 5"><path d="M0 0h9L4.500 5z" fill="#3c5688" /></svg></ScrollArrow>
        </VScroll>
      </SheetArea>
      <TabBar>
        <SheetTabs>
          <NavButtons>
            {navPaths.map((d, i) => <button key={d} aria-label={['First sheet', 'Previous sheet', 'Next sheet', 'Last sheet'][i]}><svg width="9" height="8" viewBox="0 0 9 10"><path d={d} fill="#1c3f80" stroke="#1c3f80" /></svg></button>)}
          </NavButtons>
          {sheetTabs.map(([t, w], i) => (
            <React.Fragment key={t}><SheetTab $w={w} $active={i === 0}>{t}</SheetTab><Slash first={i === 0} /></React.Fragment>
          ))}
          <SheetTab $w={19} aria-label="Insert worksheet">
            <svg width="16" height="12" viewBox="0 0 16 12"><path d="M5 2h9v7l-2 2H5z" fill="#e8f0fb" stroke="#5d6f93" /><path d="M4 0v8M0 4h8M1 1l6 6M7 1L1 7" stroke="#e8a02c" /></svg>
          </SheetTab>
          <Slash />
        </SheetTabs>
        <HScroll>
          <HSplit />
          <ScrollArrow aria-label="Scroll left"><svg width="5" height="9" viewBox="0 0 5 9"><path d="M5 0v9L0 4.500z" fill="#2b477d" /></svg></ScrollArrow>
          <HThumb><svg width="8" height="8" viewBox="0 0 8 8"><path d="M.5 0v8M3 0v8M5.500 0v8M8 0v8" stroke="#667d9f" /></svg></HThumb>
          <ScrollArrow $end aria-label="Scroll right"><svg width="5" height="9" viewBox="0 0 5 9"><path d="M0 0v9l5-4.500z" fill="#2b477d" /></svg></ScrollArrow>
          <HSplit />
          <ScrollCorner />
        </HScroll>
      </TabBar>
      <StatusBar>
        <Ready>Ready</Ready>
        <ZoomArea>
          <Views>
            <button aria-label="Normal"><svg width="13" height="11" viewBox="0 0 13 11"><path d="M.5.5h12v10H.5zM4.500.5v10M8.500.5v10M.5 4h12M.5 7h12" fill="#fff" stroke="#6b5a2c" /></svg></button>
            <button aria-label="Page layout view"><svg width="12" height="12" viewBox="0 0 12 12"><path d="M.5.5h11v11H.5z" fill="#b3b9c2" stroke="#555" /><path d="M3.500 2.500h5v7h-5z" fill="#fff" stroke="#555" /></svg></button>
            <button aria-label="Page break view"><svg width="12" height="12" viewBox="0 0 12 12"><path d="M.5.5h11v11H.5z" fill="#8b93a0" stroke="#555" /><path d="M1 1h4v6H1zM6 1h3v6H6z" fill="#fff" /></svg></button>
          </Views>
          <span>75%</span>
          <ZoomControl>
            <PlainButton aria-label="Zoom out"><svg width="16" height="16" viewBox="0 0 16 16"><circle cx="8" cy="8" r="7" fill="#d9e5f4" stroke="#3f5f90" /><path d="M4.500 8h7" stroke="#333" strokeWidth="2" /></svg></PlainButton>
            <ZoomSlider type="range" min={10} max={190} defaultValue={76} aria-label="Zoom" />
            <PlainButton aria-label="Zoom in"><svg width="16" height="16" viewBox="0 0 16 16"><circle cx="8" cy="8" r="7" fill="#d9e5f4" stroke="#3f5f90" /><path d="M4.500 8h7M8 4.500v7" stroke="#333" strokeWidth="2" /></svg></PlainButton>
          </ZoomControl>
        </ZoomArea>
      </StatusBar>
      <Taskbar>
        <Tasks>
          <TaskButton $w={54} aria-label="Start"><StartOrb /></TaskButton>
          <TaskButton $w={59} aria-label="Internet Explorer"><IeIcon /></TaskButton>
          <TaskButton $w={59} $frame="open" aria-label="Explorer"><FolderIcon /></TaskButton>
          <TaskButton $w={58} aria-label="Media Player"><PlayerIcon /></TaskButton>
          <TaskButton $w={60} aria-label="Firefox"><FirefoxIcon /></TaskButton>
          <TaskButton $w={56} aria-label="Chrome"><ChromeIcon /></TaskButton>
          <TaskButton $w={58} $frame="on" aria-label="Excel"><ExcelIcon /></TaskButton>
          <TaskButton $w={58} $frame="open" aria-label="WordPad"><WordpadIcon /></TaskButton>
          <TaskButton $w={58} $frame="open" aria-label="Paint"><PaintIcon /></TaskButton>
        </Tasks>
        <Tray>
          <TrayIcons>
            <svg width="8" height="5" viewBox="0 0 8 5"><path d="M0 5h8L4 0z" fill="#fff" /></svg>
            <svg width="16" height="16" viewBox="0 0 16 16"><path d="M1.500 1v14" stroke="#fff" strokeWidth="1.500" /><path d="M3 2h5l1 1h5v6H9L8 8H3z" fill="#fff" /><circle cx="11" cy="11" r="4.500" fill="#d8352a" /><path d="M9 9l4 4M13 9l-4 4" stroke="#fff" strokeWidth="1.300" /></svg>
            <svg width="16" height="16" viewBox="0 0 16 16" fill="none" stroke="#fff" strokeWidth="1.300"><path d="M6 4h9v7H6zM10 11v3M7 14.500h7M3 5v9h3M1 1v3h4V1M2 0v2M4 0v2" /></svg>
            <svg width="16" height="16" viewBox="0 0 16 16"><path d="M1 5h3l4-4v14l-4-4H1z" fill="#fff" /><path d="M10 5q2 3 0 6M12 3q3.500 5 0 10" fill="none" stroke="#fff" /></svg>
          </TrayIcons>
          <Clock>8:46 AM<br />4/23/2014</Clock>
          <ShowDesktop aria-label="Show desktop" />
        </Tray>
      </Taskbar>
    </Window>
  );
}
